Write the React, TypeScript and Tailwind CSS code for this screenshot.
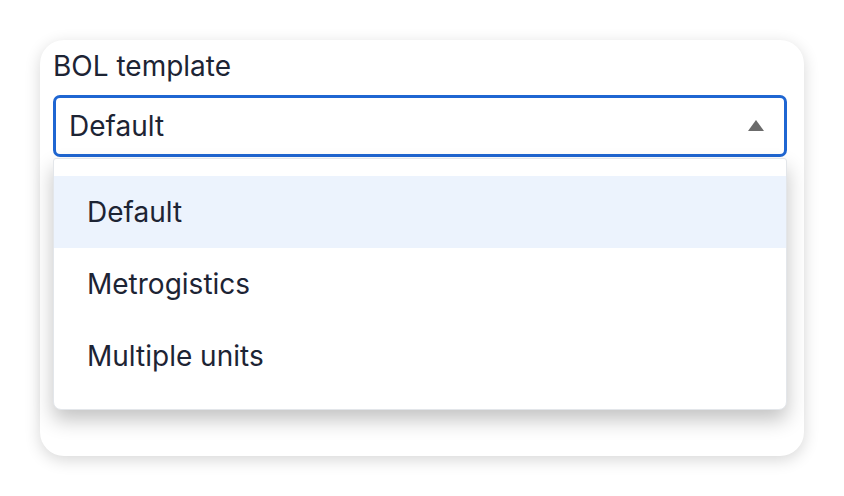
export default function App() {
  const options = ['Default', 'Metrogistics', 'Multiple units'];
  const selected = 'Default';

  return (
    <div className="min-h-screen bg-white p-[40px] font-['Inter','Noto_Sans',sans-serif] text-[#1d2434]">
      {/* Card */}
      <div className="w-[764px] h-[416px] rounded-[24px] bg-white pl-[13px] pr-[17px] pt-[10px] shadow-[0_4px_16px_rgba(0,0,0,0.16)]">
        <label className="block text-[28px] leading-[32px]">BOL template</label>

        {/* Select */}
        <div className="relative mt-[13px]">
          <div className="flex h-[62px] items-center justify-between rounded-[7px] border-[3px] border-[#1f66d2] bg-white pl-[13px] pr-[20px]">
            <span className="text-[28px] leading-[32px]">{selected}</span>
            <svg width="16" height="11" viewBox="0 0 16 11" className="mb-[2px]">
              <path d="M8 0 L16 11 L0 11 Z" fill="#6b6b6b" />
            </svg>
          </div>

          {/* Menu */}
          <ul className="absolute left-0 right-0 top-[63px] rounded-b-[8px] rounded-t-[3px] border border-[#e3e6ea] bg-white py-[17px] shadow-[0_10px_20px_rgba(0,0,0,0.24)]">
            {options.map((opt) => (
              <li
                key={opt}
                className={`flex h-[72px] items-center pl-[33px] text-[28px] leading-[32px] ${
                  opt === selected ? 'bg-[#ecf3fd]' : ''
                }`}
              >
                {opt}
              </li>
            ))}
          </ul>
        </div>
      </div>
    </div>
  );
}
